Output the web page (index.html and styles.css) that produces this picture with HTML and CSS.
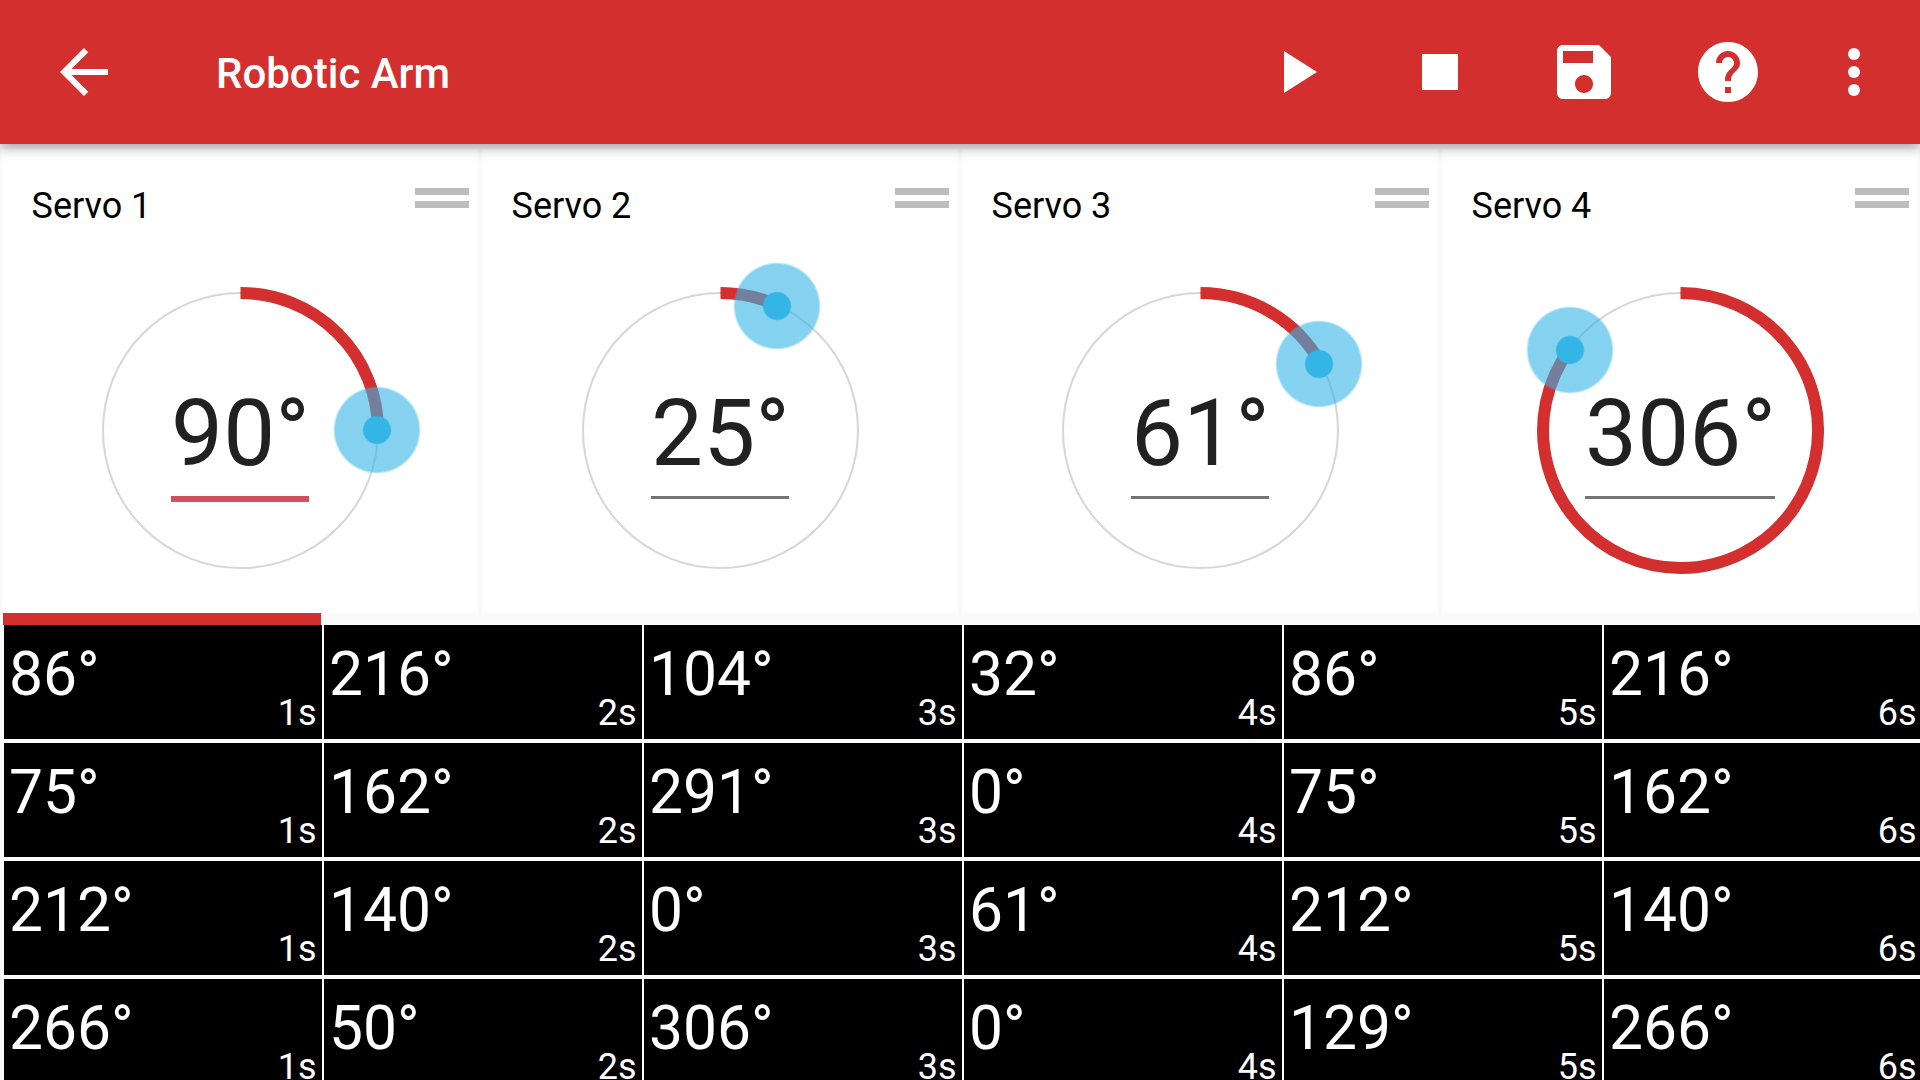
FILE: index.html
```html
<!DOCTYPE html>
<html lang="en">
<head>
<meta charset="utf-8">
<title>Robotic Arm</title>
<link rel="stylesheet" href="styles.css">
</head>
<body>
<header class="toolbar">
  <svg class="icon back" viewBox="0 0 24 24"><path d="M20 11H7.83l5.59-5.59L12 4l-8 8 8 8 1.41-1.41L7.83 13H20v-2z"/></svg>
  <h1 class="title">Robotic Arm</h1>
  <nav class="actions">
    <svg class="icon" viewBox="0 0 24 24"><path d="M8 5v14l11-7z"/></svg>
    <svg class="icon" viewBox="0 0 24 24"><path d="M6 6h12v12H6z"/></svg>
    <svg class="icon" viewBox="0 0 24 24"><path d="M17 3H5c-1.11 0-2 .9-2 2v14c0 1.1.89 2 2 2h14c1.1 0 2-.9 2-2V7l-4-4zm-5 16c-1.66 0-3-1.34-3-3s1.34-3 3-3 3 1.34 3 3-1.34 3-3 3zm3-10H5V5h10v4z"/></svg>
    <svg class="icon" viewBox="0 0 24 24"><path d="M12 2C6.48 2 2 6.48 2 12s4.48 10 10 10 10-4.48 10-10S17.52 2 12 2zm1 17h-2v-2h2v2zm2.07-7.75l-.9.92C13.45 12.9 13 13.5 13 15h-2v-.5c0-1.1.45-2.1 1.17-2.83l1.24-1.26c.37-.36.59-.86.59-1.41 0-1.1-.9-2-2-2s-2 .9-2 2H8c0-2.21 1.79-4 4-4s4 1.79 4 4c0 .88-.36 1.68-.93 2.25z"/></svg>
    <svg class="icon more" viewBox="0 0 24 24"><circle cx="12" cy="6" r="2"/><circle cx="12" cy="12" r="2"/><circle cx="12" cy="18" r="2"/></svg>
  </nav>
</header>

<main>
  <section class="servos">
    <article class="card">
      <div class="card-head"><h2 class="name">Servo 1</h2><span class="handle"></span></div>
      <div class="dial">
        <svg class="ring" viewBox="0 0 476 386">
          <defs>
            <radialGradient id="thumb" gradientUnits="userSpaceOnUse" cx="0" cy="0" r="44">
              <stop offset="0.3" stop-color="#33b5e5"/>
              <stop offset="0.335" stop-color="#33b5e5" stop-opacity="0.6"/>
              <stop offset="0.945" stop-color="#33b5e5" stop-opacity="0.6"/>
              <stop offset="1" stop-color="#33b5e5" stop-opacity="0"/>
            </radialGradient>
          </defs>
          <circle class="track" cx="238.5" cy="203.5" r="137.5"/>
          <path class="arc" d="M238.5 66A137.5 137.5 0 0 1 376 203.5"/>
          <circle class="thumb" r="44" transform="translate(375 203)"/>
        </svg>
        <div class="value focused">90°</div>
      </div>
    </article>
    <article class="card">
      <div class="card-head"><h2 class="name">Servo 2</h2><span class="handle"></span></div>
      <div class="dial">
        <svg class="ring" viewBox="0 0 476 386">
          <circle class="track" cx="238.5" cy="203.5" r="137.5"/>
          <path class="arc" d="M238.5 66A137.5 137.5 0 0 1 296.6 78.9"/>
          <circle class="thumb" r="44" transform="translate(295 79)"/>
        </svg>
        <div class="value">25°</div>
      </div>
    </article>
    <article class="card">
      <div class="card-head"><h2 class="name">Servo 3</h2><span class="handle"></span></div>
      <div class="dial">
        <svg class="ring" viewBox="0 0 476 386">
          <circle class="track" cx="238.5" cy="203.5" r="137.5"/>
          <path class="arc" d="M238.5 66A137.5 137.5 0 0 1 358.8 136.8"/>
          <circle class="thumb" r="44" transform="translate(357 137)"/>
        </svg>
        <div class="value">61°</div>
      </div>
    </article>
    <article class="card">
      <div class="card-head"><h2 class="name">Servo 4</h2><span class="handle"></span></div>
      <div class="dial">
        <svg class="ring" viewBox="0 0 476 386">
          <circle class="track" cx="238.5" cy="203.5" r="137.5"/>
          <path class="arc" d="M238.5 66A137.5 137.5 0 1 1 127.3 122.7"/>
          <circle class="thumb" r="44" transform="translate(128 123)"/>
        </svg>
        <div class="value wide">306°</div>
      </div>
    </article>
  </section>

  <div class="progress"><div class="progress-fill"></div></div>

  <section class="timeline">
    <div class="cell"><span class="angle">86°</span><span class="time">1s</span></div>
    <div class="cell"><span class="angle">216°</span><span class="time">2s</span></div>
    <div class="cell"><span class="angle">104°</span><span class="time">3s</span></div>
    <div class="cell"><span class="angle">32°</span><span class="time">4s</span></div>
    <div class="cell"><span class="angle">86°</span><span class="time">5s</span></div>
    <div class="cell"><span class="angle">216°</span><span class="time">6s</span></div>

    <div class="cell"><span class="angle">75°</span><span class="time">1s</span></div>
    <div class="cell"><span class="angle">162°</span><span class="time">2s</span></div>
    <div class="cell"><span class="angle">291°</span><span class="time">3s</span></div>
    <div class="cell"><span class="angle">0°</span><span class="time">4s</span></div>
    <div class="cell"><span class="angle">75°</span><span class="time">5s</span></div>
    <div class="cell"><span class="angle">162°</span><span class="time">6s</span></div>

    <div class="cell"><span class="angle">212°</span><span class="time">1s</span></div>
    <div class="cell"><span class="angle">140°</span><span class="time">2s</span></div>
    <div class="cell"><span class="angle">0°</span><span class="time">3s</span></div>
    <div class="cell"><span class="angle">61°</span><span class="time">4s</span></div>
    <div class="cell"><span class="angle">212°</span><span class="time">5s</span></div>
    <div class="cell"><span class="angle">140°</span><span class="time">6s</span></div>

    <div class="cell"><span class="angle">266°</span><span class="time">1s</span></div>
    <div class="cell"><span class="angle">50°</span><span class="time">2s</span></div>
    <div class="cell"><span class="angle">306°</span><span class="time">3s</span></div>
    <div class="cell"><span class="angle">0°</span><span class="time">4s</span></div>
    <div class="cell"><span class="angle">129°</span><span class="time">5s</span></div>
    <div class="cell"><span class="angle">266°</span><span class="time">6s</span></div>
  </section>
</main>
</body>
</html>
```
FILE: styles.css
```css
* {
  box-sizing: border-box;
  margin: 0;
}

body {
  height: 1080px;
  overflow: hidden;
  background: #fafafa;
  font-family: Roboto, "Liberation Sans", sans-serif;
}

/* App bar */
.toolbar {
  position: relative;
  z-index: 1;
  display: flex;
  align-items: center;
  height: 144px;
  padding: 0 30px 0 48px;
  background: #d32f2f;
  box-shadow: 0 3px 12px rgba(0, 0, 0, 0.4);
  color: #fff;
}

.icon {
  width: 72px;
  height: 72px;
  fill: currentColor;
}

.title {
  margin-left: 96px;
  padding-top: 3px;
  font-size: 42px;
  font-weight: 500;
  line-height: 48px;
}

.actions {
  display: flex;
  gap: 72px;
  margin-left: auto;
}

.more {
  margin-left: -18px;
}

/* Servo cards */
.servos {
  display: grid;
  grid-template-columns: repeat(4, 476px);
  gap: 4px;
  padding: 5px 2px 0;
}

.card {
  height: 464px;
  background: #fff;
}

.card-head {
  display: flex;
  justify-content: space-between;
  height: 78px;
  padding: 36px 9px 0 29.5px;
}

.name {
  font-size: 36px;
  font-weight: 400;
  line-height: 42px;
  color: #000;
}

.handle {
  width: 54px;
  height: 20px;
  margin-top: 3px;
  border: solid #bdbdbd;
  border-width: 7px 0;
}

.dial {
  display: grid;
  justify-items: center;
  align-items: start;
}

.ring,
.value {
  grid-area: 1 / 1;
}

.ring {
  width: 476px;
  height: 386px;
}

.track {
  fill: none;
  stroke: #d6d6d6;
  stroke-width: 2;
}

.arc {
  fill: none;
  stroke: #d32f2f;
  stroke-width: 12;
}

.thumb {
  fill: url(#thumb);
}

.value {
  width: 138px;
  margin-top: 153px;
  padding-bottom: 8px;
  border-bottom: 3px solid #757575;
  font-size: 92.5px;
  line-height: 108px;
  letter-spacing: 0.2px;
  white-space: nowrap;
  color: #212121;
}

.value.wide {
  width: 190px;
}

.value.focused {
  border-bottom: 6px solid #d05060;
}

/* Playback progress */
.progress {
  height: 12px;
  padding-left: 3px;
}

.progress-fill {
  width: 318px;
  height: 12px;
  background: #d32f2f;
}

/* Keyframe table */
.timeline {
  display: grid;
  grid-template-columns: repeat(6, 318px);
  grid-auto-rows: 114px;
  gap: 4px 2px;
  padding-left: 4px;
}

.cell {
  display: flex;
  justify-content: space-between;
  padding: 14px 5.5px 5px 5px;
  background: #000;
  box-shadow: 2px 0 #fff;
  color: #fff;
}

.angle {
  font-size: 60.5px;
  line-height: 71px;
}

.time {
  align-self: flex-end;
  font-size: 36px;
  line-height: 42px;
}
```
